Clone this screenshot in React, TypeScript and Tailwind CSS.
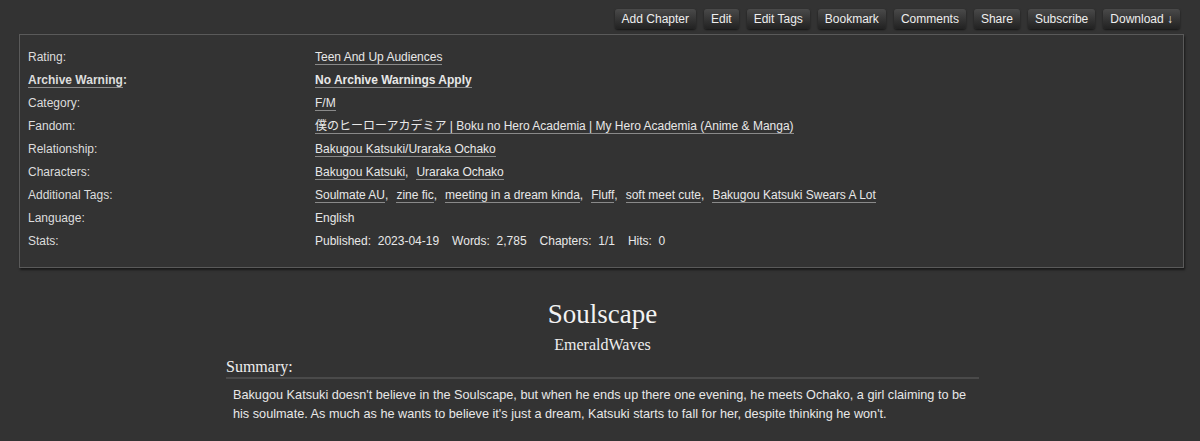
import React from 'react';

const buttons = ['Add Chapter', 'Edit', 'Edit Tags', 'Bookmark', 'Comments', 'Share', 'Subscribe', 'Download ↓'];

function Tag({ children, bold = false }: { children: React.ReactNode; bold?: boolean }) {
  return (
    <span className={`border-b border-[#8a8a8a] leading-[15px] ${bold ? 'font-bold' : ''}`}>{children}</span>
  );
}

function TagList({ items }: { items: string[] }) {
  return (
    <span className="flex flex-wrap">
      {items.map((t, i) => (
        <span key={t} className="mr-[8px]">
          <Tag>{t}</Tag>
          {i < items.length - 1 ? ',' : ''}
        </span>
      ))}
    </span>
  );
}

const rows: { label: React.ReactNode; value: React.ReactNode }[] = [
  { label: 'Rating:', value: <Tag>Teen And Up Audiences</Tag> },
  {
    label: (
      <span className="font-bold">
        <Tag>Archive Warning</Tag>:
      </span>
    ),
    value: <Tag bold>No Archive Warnings Apply</Tag>,
  },
  { label: 'Category:', value: <Tag>F/M</Tag> },
  { label: 'Fandom:', value: <Tag>僕のヒーローアカデミア | Boku no Hero Academia | My Hero Academia (Anime &amp; Manga)</Tag> },
  { label: 'Relationship:', value: <Tag>Bakugou Katsuki/Uraraka Ochako</Tag> },
  { label: 'Characters:', value: <TagList items={['Bakugou Katsuki', 'Uraraka Ochako']} /> },
  {
    label: 'Additional Tags:',
    value: (
      <TagList
        items={['Soulmate AU', 'zine fic', 'meeting in a dream kinda', 'Fluff', 'soft meet cute', 'Bakugou Katsuki Swears A Lot']}
      />
    ),
  },
  { label: 'Language:', value: 'English' },
  {
    label: 'Stats:',
    value: (
      <span className="flex gap-[13px]">
        <span>Published:&nbsp; 2023-04-19</span>
        <span>Words:&nbsp; 2,785</span>
        <span>Chapters:&nbsp; 1/1</span>
        <span>Hits:&nbsp; 0</span>
      </span>
    ),
  },
];

export default function App() {
  return (
    <div className="min-h-[441px] bg-[#333333] text-[#e8e8e8] font-['Liberation_Sans','Noto_Sans_CJK_JP',sans-serif] text-[12px]">
      <div className="flex justify-end gap-2 pt-[9px] pr-[20px]">
        {buttons.map((b) => (
          <button
            key={b}
            className="h-[20px] rounded-[3px] px-[7px] bg-gradient-to-b from-[#4a4a4a] to-[#222222] text-[#eeeeee] text-[12px] leading-[20px] shadow-[0_1px_2px_rgba(0,0,0,0.6)]"
          >
            {b}
          </button>
        ))}
      </div>

      <div className="mt-[5px] ml-[19px] mr-[16px] border border-[#5a5a5a] shadow-[1px_2px_2px_rgba(0,0,0,0.5)] pt-[10px] pb-[15px]">
        {rows.map((r, i) => (
          <div key={i} className="flex h-[23px] items-center">
            <div className="w-[295px] pl-[8px] text-[#dddddd]">{r.label}</div>
            <div className="flex-1">{r.value}</div>
          </div>
        ))}
      </div>

      <div className="ml-[226px] mt-[29px] w-[753px] font-['Liberation_Serif',serif]">
        <h2 className="text-center text-[27px] leading-[34px] text-[#f2f2f2]">Soulscape</h2>
        <h3 className="mt-[4px] text-center text-[16px] leading-[20px] text-[#eeeeee]">EmeraldWaves</h3>
        <h3 className="mt-[2px] border-b-2 border-[#4a4a4a] text-[16px] leading-[20px] text-[#eeeeee]">Summary:</h3>
        <p className="mt-[7px] pl-[7px] font-['Liberation_Sans',sans-serif] text-[12.7px] leading-[19px] text-[#e8e8e8]">
          Bakugou Katsuki doesn't believe in the Soulscape, but when he ends up there one evening, he meets Ochako, a girl claiming to be his soulmate. As much as he wants to believe it's just a dream, Katsuki starts to fall for her, despite thinking he won't.
        </p>
      </div>
    </div>
  );
}
